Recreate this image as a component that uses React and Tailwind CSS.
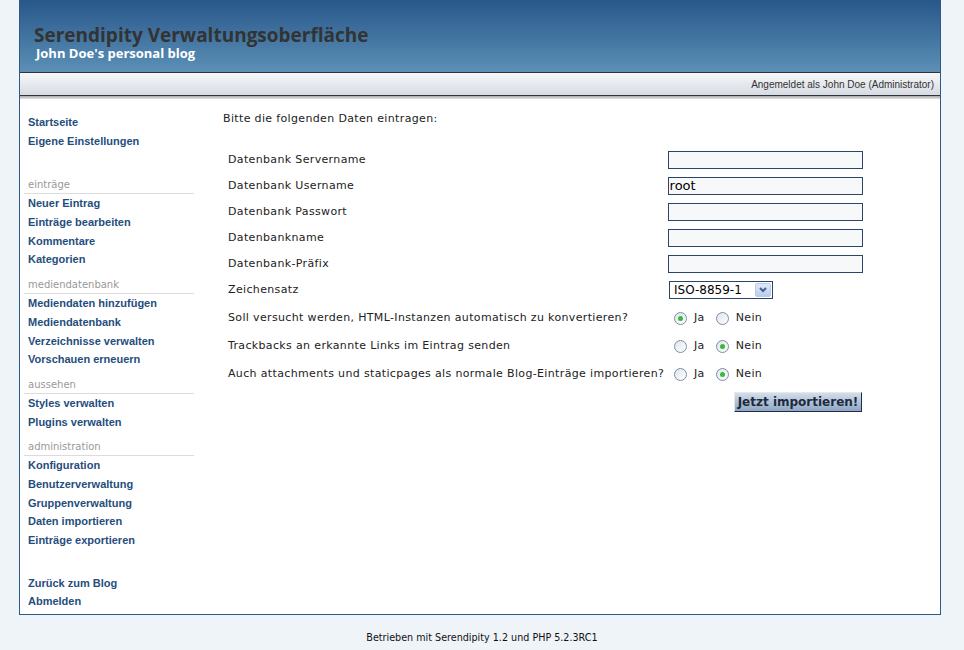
import React from "react";

const sections = [
  { title: null, links: ["Startseite", "Eigene Einstellungen"] },
  { title: "einträge", links: ["Neuer Eintrag", "Einträge bearbeiten", "Kommentare", "Kategorien"] },
  { title: "mediendatenbank", links: ["Mediendaten hinzufügen", "Mediendatenbank", "Verzeichnisse verwalten", "Vorschauen erneuern"] },
  { title: "aussehen", links: ["Styles verwalten", "Plugins verwalten"] },
  { title: "administration", links: ["Konfiguration", "Benutzerverwaltung", "Gruppenverwaltung", "Daten importieren", "Einträge exportieren"] },
];

const textFields = [
  { label: "Datenbank Servername", value: "" },
  { label: "Datenbank Username", value: "root" },
  { label: "Datenbank Passwort", value: "" },
  { label: "Datenbankname", value: "" },
  { label: "Datenbank-Präfix", value: "" },
];

const radios = [
  { label: "Soll versucht werden, HTML-Instanzen automatisch zu konvertieren?", yes: true },
  { label: "Trackbacks an erkannte Links im Eintrag senden", yes: false },
  { label: "Auch attachments und staticpages als normale Blog-Einträge importieren?", yes: false },
];

function NavLink({ children }) {
  return (
    <a href="#" className="block h-[18.7px] leading-[18.7px] pl-[7px] text-[11px] font-bold text-[#1f4e7d] no-underline">
      {children}
    </a>
  );
}

function Radio({ checked }) {
  return (
    <span className="inline-flex h-[13px] w-[13px] items-center justify-center rounded-full border border-[#7b8ea5] bg-gradient-to-br from-[#dfe4ea] to-white">
      {checked && <span className="h-[5px] w-[5px] rounded-full bg-[#3cb83c]" />}
    </span>
  );
}

export default function App() {
  return (
    <div className="min-h-screen bg-[#eff4f9] font-['DejaVu_Sans',sans-serif] text-[#222]">
      <div className="ml-[19px] w-[922px] border-x border-b border-[#2b5a87] bg-white">
        {/* kopf */}
        <header className="h-[72px] bg-gradient-to-b from-[#28578a] to-[#5c90b6] pl-[14px] pt-[26px]">
          <h1 className="text-[19px] font-bold leading-[18px] text-[#333] font-['Open_Sans',sans-serif]">
            Serendipity Verwaltungsoberfläche
          </h1>
          <div className="mt-[3px] pl-[2px] text-[13px] font-bold leading-[13px] text-white font-['Open_Sans',sans-serif]">
            John Doe's personal blog
          </div>
        </header>
        <div className="flex h-[24px] items-center justify-end border-y border-[#333] bg-gradient-to-b from-[#f6f7f9] to-[#d6dbe4] pr-[6px] text-[10px] text-[#333] font-['Liberation_Sans',sans-serif]">
          Angemeldet als John Doe (Administrator)
        </div>
        <div className="h-[3px] bg-gradient-to-b from-[#a9a9a9] to-[#e6e6e6]" />

        <div className="flex">
          {/* navigation */}
          <nav className="w-[174px] pb-[3px] pt-[14px] pl-[1px] font-['Liberation_Sans',sans-serif]">
            {sections.map((s, i) => (
              <div key={i} className={i === 0 ? "" : i === 1 ? "mt-[26px]" : "mt-[7px]"}>
                {s.title && (
                  <div className="ml-[3px] border-b border-[#dcdcdc] pl-[4px] text-[10px] leading-[17px] text-[#999] font-['DejaVu_Sans',sans-serif]">
                    {s.title}
                  </div>
                )}
                {s.links.map((l) => (
                  <NavLink key={l}>{l}</NavLink>
                ))}
              </div>
            ))}
            <div className="mt-[24px]">
              <NavLink>Zurück zum Blog</NavLink>
              <NavLink>Abmelden</NavLink>
            </div>
          </nav>

          {/* inhalt */}
          <main className="flex-1 pl-[29px] pt-[12px] text-[11px] tracking-[0.35px]">
            <p className="leading-[16px]">Bitte die folgenden Daten eintragen:</p>
            <div className="mt-[20px] w-[640px]">
              {textFields.map((f) => (
                <div key={f.label} className="flex h-[26px] items-center">
                  <span className="w-[446px] pl-[5px]">{f.label}</span>
                  <input
                    type="text"
                    defaultValue={f.value}
                    className="h-[18px] w-[196px] border border-[#2a4566] bg-[#f6f8fa] px-[1px] text-[13px] tracking-normal text-black outline-none"
                  />
                </div>
              ))}
              <div className="flex h-[26px] items-center">
                <span className="w-[446px] pl-[5px]">Zeichensatz</span>
                <div className="flex h-[18px] w-[104px] items-center border border-[#2a4566] bg-white">
                  <span className="flex-1 pl-[4px] text-[12px] tracking-normal text-black">ISO-8859-1</span>
                  <span className="mr-[1px] flex h-[14px] w-[16px] items-center justify-center rounded-[2px] border border-[#b8cbe8] bg-gradient-to-b from-[#dfe9fb] to-[#b7cdf1]">
                    <svg width="8" height="6" viewBox="0 0 8 6">
                      <path d="M1 1 L4 4 L7 1" fill="none" stroke="#4d6185" strokeWidth="2" />
                    </svg>
                  </span>
                </div>
              </div>
              <div className="pt-[1px]">
                {radios.map((r) => (
                  <div key={r.label} className="flex h-[28px] items-center">
                    <span className="w-[451px] pl-[5px]">{r.label}</span>
                    <span className="flex items-center text-[11px]">
                      <Radio checked={r.yes} />
                      <span className="ml-[7px] mr-[11px]">Ja</span>
                      <Radio checked={!r.yes} />
                      <span className="ml-[7px]">Nein</span>
                    </span>
                  </div>
                ))}
              </div>
              <div className="mt-[4px] flex justify-end pr-[1px]">
                <button className="h-[20px] w-[128px] border border-t-[#e4e9f1] border-l-[#e4e9f1] border-b-[#1e2d42] border-r-[#1e2d42] bg-gradient-to-b from-[#d4deea] to-[#8ea6c4] text-[12px] font-bold tracking-normal text-[#1d2b3d]">
                  Jetzt importieren!
                </button>
              </div>
            </div>
          </main>
        </div>
      </div>
      <footer className="pt-[17px] text-center text-[9.6px] leading-[12px] text-[#111]">
        Betrieben mit Serendipity 1.2 und PHP 5.2.3RC1
      </footer>
    </div>
  );
}
